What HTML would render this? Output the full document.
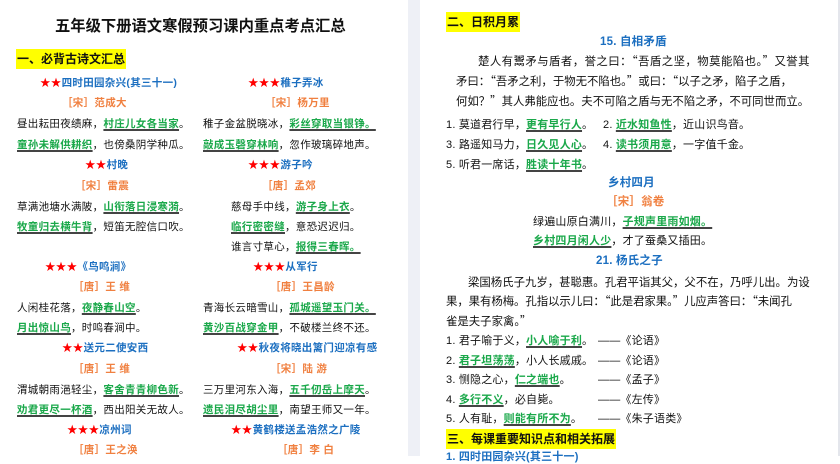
<!DOCTYPE html>
<html><head><meta charset="utf-8"><style>
body{margin:0;width:840px;height:456px;overflow:hidden;background:#fff;position:relative;font-family:"Liberation Sans","Noto Sans CJK SC",sans-serif;color:#111}
.gap{position:absolute;left:408px;top:0;width:12px;height:456px;background:#eef0f6}
.edge{position:absolute;left:838px;top:0;width:2px;height:456px;background:#e4e6ec}
.t{position:absolute;white-space:nowrap;line-height:14px}
.l{font-size:10.5px;letter-spacing:.3px}
.r{font-size:11px;letter-spacing:.2px}
.p{font-size:11.4px;font-family:"Noto Sans CJK SC",sans-serif}
.s{color:#f00}
.b{color:#1c6fc0;font-weight:bold}
.o{color:#f08040;font-weight:bold}
.g{color:#1aa84a;font-weight:bold;text-decoration:underline;text-decoration-color:#444;text-decoration-thickness:1.5px;text-underline-offset:2px}
.h{background:#ffff00;font-weight:bold;font-size:12px;padding:3px 1px}
</style></head><body>
<div class="gap"></div><div class="edge"></div>

<div class="t" style="left:55px;top:19px;font-size:15.3px;font-weight:bold;line-height:16px">五年级下册语文寒假预习课内重点考点汇总</div>
<div class="t h" style="left:16px;top:49px">一、必背古诗文汇总</div>

<div class="t l b" style="left:40px;top:76px"><span class="s">★★</span>四时田园杂兴(其三十一)</div>
<div class="t l b" style="left:248px;top:76px"><span class="s">★★★</span>稚子弄冰</div>
<div class="t l o" style="left:62px;top:96px">［宋］范成大</div>
<div class="t l o" style="left:265px;top:96px">［宋］杨万里</div>
<div class="t l" style="left:17px;top:117px">昼出耘田夜绩麻，<span class="g">村庄儿女各当家</span>。</div>
<div class="t l" style="left:203px;top:117px">稚子金盆脱晓冰，<span class="g">彩丝穿取当银铮。</span></div>
<div class="t l" style="left:17px;top:138px"><span class="g">童孙未解供耕织</span>，也傍桑阴学种瓜。</div>
<div class="t l" style="left:203px;top:138px"><span class="g">敲成玉磬穿林响</span>，忽作玻璃碎地声。</div>

<div class="t l b" style="left:85px;top:158px"><span class="s">★★</span>村晚</div>
<div class="t l b" style="left:248px;top:158px"><span class="s">★★★</span>游子吟</div>
<div class="t l o" style="left:75px;top:179px">［宋］雷震</div>
<div class="t l o" style="left:262px;top:179px">［唐］孟郊</div>
<div class="t l" style="left:17px;top:200px">草满池塘水满陂，<span class="g">山衔落日浸寒漪</span>。</div>
<div class="t l" style="left:231px;top:200px">慈母手中线，<span class="g">游子身上衣</span>。</div>
<div class="t l" style="left:17px;top:220px"><span class="g">牧童归去横牛背</span>，短笛无腔信口吹。</div>
<div class="t l" style="left:231px;top:220px"><span class="g">临行密密缝</span>，意恐迟迟归。</div>
<div class="t l" style="left:231px;top:240px">谁言寸草心，<span class="g">报得三春晖。</span></div>

<div class="t l b" style="left:45px;top:260px"><span class="s">★★★</span>《鸟鸣涧》</div>
<div class="t l b" style="left:253px;top:260px"><span class="s">★★★</span>从军行</div>
<div class="t l o" style="left:73px;top:280px">［唐］王 维</div>
<div class="t l o" style="left:270px;top:280px">［唐］王昌龄</div>
<div class="t l" style="left:17px;top:301px">人闲桂花落，<span class="g">夜静春山空</span>。</div>
<div class="t l" style="left:203px;top:301px">青海长云暗雪山，<span class="g">孤城遥望玉门关。</span></div>
<div class="t l" style="left:17px;top:321px"><span class="g">月出惊山鸟</span>，时鸣春涧中。</div>
<div class="t l" style="left:203px;top:321px"><span class="g">黄沙百战穿金甲</span>，不破楼兰终不还。</div>

<div class="t l b" style="left:62px;top:341px"><span class="s">★★</span>送元二使安西</div>
<div class="t l b" style="left:237px;top:341px"><span class="s">★★</span>秋夜将晓出篱门迎凉有感</div>
<div class="t l o" style="left:73px;top:362px">［唐］王 维</div>
<div class="t l o" style="left:270px;top:362px">［宋］陆 游</div>
<div class="t l" style="left:17px;top:383px">渭城朝雨浥轻尘，<span class="g">客舍青青柳色新</span>。</div>
<div class="t l" style="left:203px;top:383px">三万里河东入海，<span class="g">五千仞岳上摩天</span>。</div>
<div class="t l" style="left:17px;top:403px"><span class="g">劝君更尽一杯酒</span>，西出阳关无故人。</div>
<div class="t l" style="left:203px;top:403px"><span class="g">遗民泪尽胡尘里</span>，南望王师又一年。</div>
<div class="t l b" style="left:67px;top:423px"><span class="s">★★★</span>凉州词</div>
<div class="t l b" style="left:231px;top:423px"><span class="s">★★</span>黄鹤楼送孟浩然之广陵</div>
<div class="t l o" style="left:73px;top:443px">［唐］王之涣</div>
<div class="t l o" style="left:277px;top:443px">［唐］李 白</div>

<!-- right page -->
<div class="t h" style="left:446px;top:12px">二、日积月累</div>
<div class="t r b" style="left:600px;top:35px;font-size:11.5px">15. 自相矛盾</div>
<div class="t p" style="left:478px;top:54px;letter-spacing:.45px">楚人有鬻矛与盾者，誉之曰：“吾盾之坚，物莫能陷也。”又誉其</div>
<div class="t p" style="left:456px;top:74px">矛曰：“吾矛之利，于物无不陷也。”或曰：“以子之矛，陷子之盾，</div>
<div class="t p" style="left:456px;top:94px">何如？”其人弗能应也。夫不可陷之盾与无不陷之矛，不可同世而立。</div>
<div class="t r" style="left:446px;top:118px">1. 莫道君行早，<span class="g">更有早行人</span>。</div>
<div class="t r" style="left:603px;top:118px">2. <span class="g">近水知鱼性</span>，近山识鸟音。</div>
<div class="t r" style="left:446px;top:138px">3. 路遥知马力，<span class="g">日久见人心</span>。</div>
<div class="t r" style="left:603px;top:138px">4. <span class="g">读书须用意</span>，一字值千金。</div>
<div class="t r" style="left:446px;top:158px">5. 听君一席话，<span class="g">胜读十年书</span>。</div>
<div class="t r b" style="left:608px;top:176px;font-size:11.5px">乡村四月</div>
<div class="t r o" style="left:606px;top:195px;font-size:11.5px">［宋］翁卷</div>
<div class="t r" style="left:533px;top:215px">绿遍山原白满川，<span class="g">子规声里雨如烟。</span></div>
<div class="t r" style="left:533px;top:234px"><span class="g">乡村四月闲人少</span>，才了蚕桑又插田。</div>
<div class="t r b" style="left:596px;top:254px;font-size:11.5px">21. 杨氏之子</div>
<div class="t p" style="left:468px;top:275px">梁国杨氏子九岁，甚聪惠。孔君平诣其父，父不在，乃呼儿出。为设</div>
<div class="t p" style="left:446px;top:294px;letter-spacing:-.05px">果，果有杨梅。孔指以示儿曰：“此是君家果。”儿应声答曰：“未闻孔</div>
<div class="t p" style="left:446px;top:314px">雀是夫子家禽。”</div>
<div class="t r" style="left:446px;top:334px">1. 君子喻于义，<span class="g">小人喻于利</span>。</div>
<div class="t r" style="left:446px;top:354px">2. <span class="g">君子坦荡荡</span>，小人长戚戚。</div>
<div class="t r" style="left:446px;top:373px">3. 恻隐之心，<span class="g">仁之端也</span>。</div>
<div class="t r" style="left:446px;top:393px">4. <span class="g">多行不义</span>，必自毙。</div>
<div class="t r" style="left:446px;top:412px">5. 人有耻，<span class="g">则能有所不为</span>。</div>
<div class="t r" style="left:598px;top:334px">——《论语》</div>
<div class="t r" style="left:598px;top:354px">——《论语》</div>
<div class="t r" style="left:598px;top:373px">——《孟子》</div>
<div class="t r" style="left:598px;top:393px">——《左传》</div>
<div class="t r" style="left:598px;top:412px">——《朱子语类》</div>
<div class="t h" style="left:446px;top:429px">三、每课重要知识点和相关拓展</div>
<div class="t r b" style="left:446px;top:450px">1. 四时田园杂兴(其三十一)</div>
</body></html>
